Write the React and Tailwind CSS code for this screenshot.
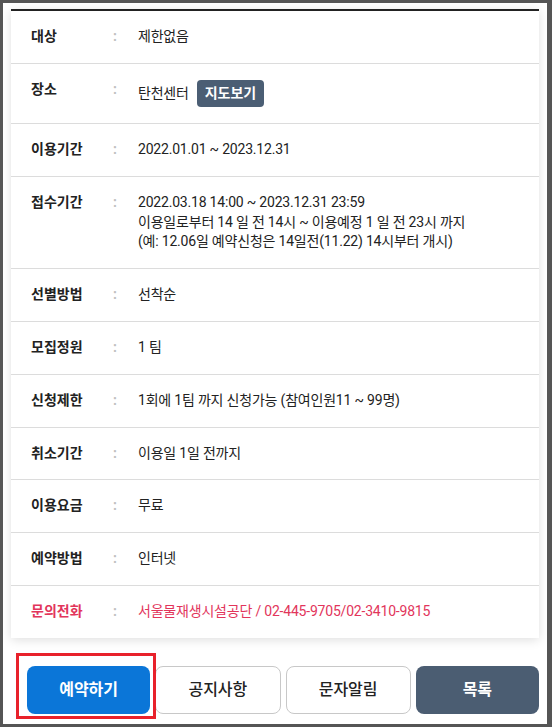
import React from 'react';

const rows = [
  { label: '대상', value: ['제한없음'] },
  { label: '장소', value: ['탄천센터'], map: true },
  { label: '이용기간', value: ['2022.01.01 ~ 2023.12.31'] },
  {
    label: '접수기간',
    value: [
      '2022.03.18 14:00 ~ 2023.12.31 23:59',
      '이용일로부터 14 일 전 14시 ~ 이용예정 1 일 전 23시 까지',
      '(예: 12.06일 예약신청은 14일전(11.22) 14시부터 개시)',
    ],
  },
  { label: '선별방법', value: ['선착순'] },
  { label: '모집정원', value: ['1 팀'] },
  { label: '신청제한', value: ['1회에 1팀 까지 신청가능 (참여인원11 ~ 99명)'] },
  { label: '취소기간', value: ['이용일 1일 전까지'] },
  { label: '이용요금', value: ['무료'] },
  { label: '예약방법', value: ['인터넷'] },
  { label: '문의전화', value: ['서울물재생시설공단 / 02-445-9705/02-3410-9815'], red: true },
];

function Row({ row, last }) {
  const color = row.red ? 'text-[#e2355b]' : 'text-[#222]';
  return (
    <div className={`flex px-5 pt-4 pb-[16.6px] leading-[19.3px] ${last ? '' : 'border-b border-[#dcdcdc]'}`}>
      <div className={`w-[82px] shrink-0 font-bold ${color}`}>{row.label}</div>
      <div className="w-[25px] shrink-0 font-bold text-[#c0c0c0]">:</div>
      {row.map ? (
        <div className="flex h-[27px] items-center tracking-[-0.2px]">
          <span className={color}>{row.value[0]}</span>
          <button className="ml-[8px] h-[27px] rounded-[4px] bg-[#4b5e74] px-[8px] font-bold tracking-normal text-white">
            지도보기
          </button>
        </div>
      ) : (
        <div className={`flex flex-col tracking-[-0.2px] ${color}`}>
          {row.value.map((line) => (
            <span key={line}>{line}</span>
          ))}
        </div>
      )}
    </div>
  );
}

export default function App() {
  return (
    <div
      className="h-[727px] w-[552px] overflow-hidden border-t-[3px] border-b-[3px] border-l-[3px] border-r-[5px] border-[#555] bg-white text-[14px]"
      style={{ fontFamily: 'Roboto, "Noto Sans CJK KR", sans-serif' }}
    >
      <div className="px-2 pt-[6px]">
        <div className="border-t-2 border-[#222] bg-white shadow-[0_2px_10px_rgba(0,0,0,0.13)]">
          {rows.map((row, i) => (
            <Row key={row.label} row={row} last={i === rows.length - 1} />
          ))}
        </div>

        <div className="mt-[28px] flex gap-[5px] pl-4">
          <div className="relative flex-1">
            <div className="pointer-events-none absolute -left-[11px] -top-[13px] h-[66px] w-[140px] border-[3px] border-[#e8212b]" />
            <button className="h-[48px] w-full rounded-[8px] bg-[#0b76d8] text-[16px] font-bold text-white">
              예약하기
            </button>
          </div>
          <button className="h-[48px] flex-1 rounded-[8px] border border-[#c8c8c8] bg-white text-[16px] font-medium text-[#222]">
            공지사항
          </button>
          <button className="h-[48px] flex-1 rounded-[8px] border border-[#c8c8c8] bg-white text-[16px] font-medium text-[#222]">
            문자알림
          </button>
          <button className="h-[48px] flex-1 rounded-[8px] bg-[#4b5d72] text-[16px] font-bold text-white">
            목록
          </button>
        </div>
      </div>
    </div>
  );
}
